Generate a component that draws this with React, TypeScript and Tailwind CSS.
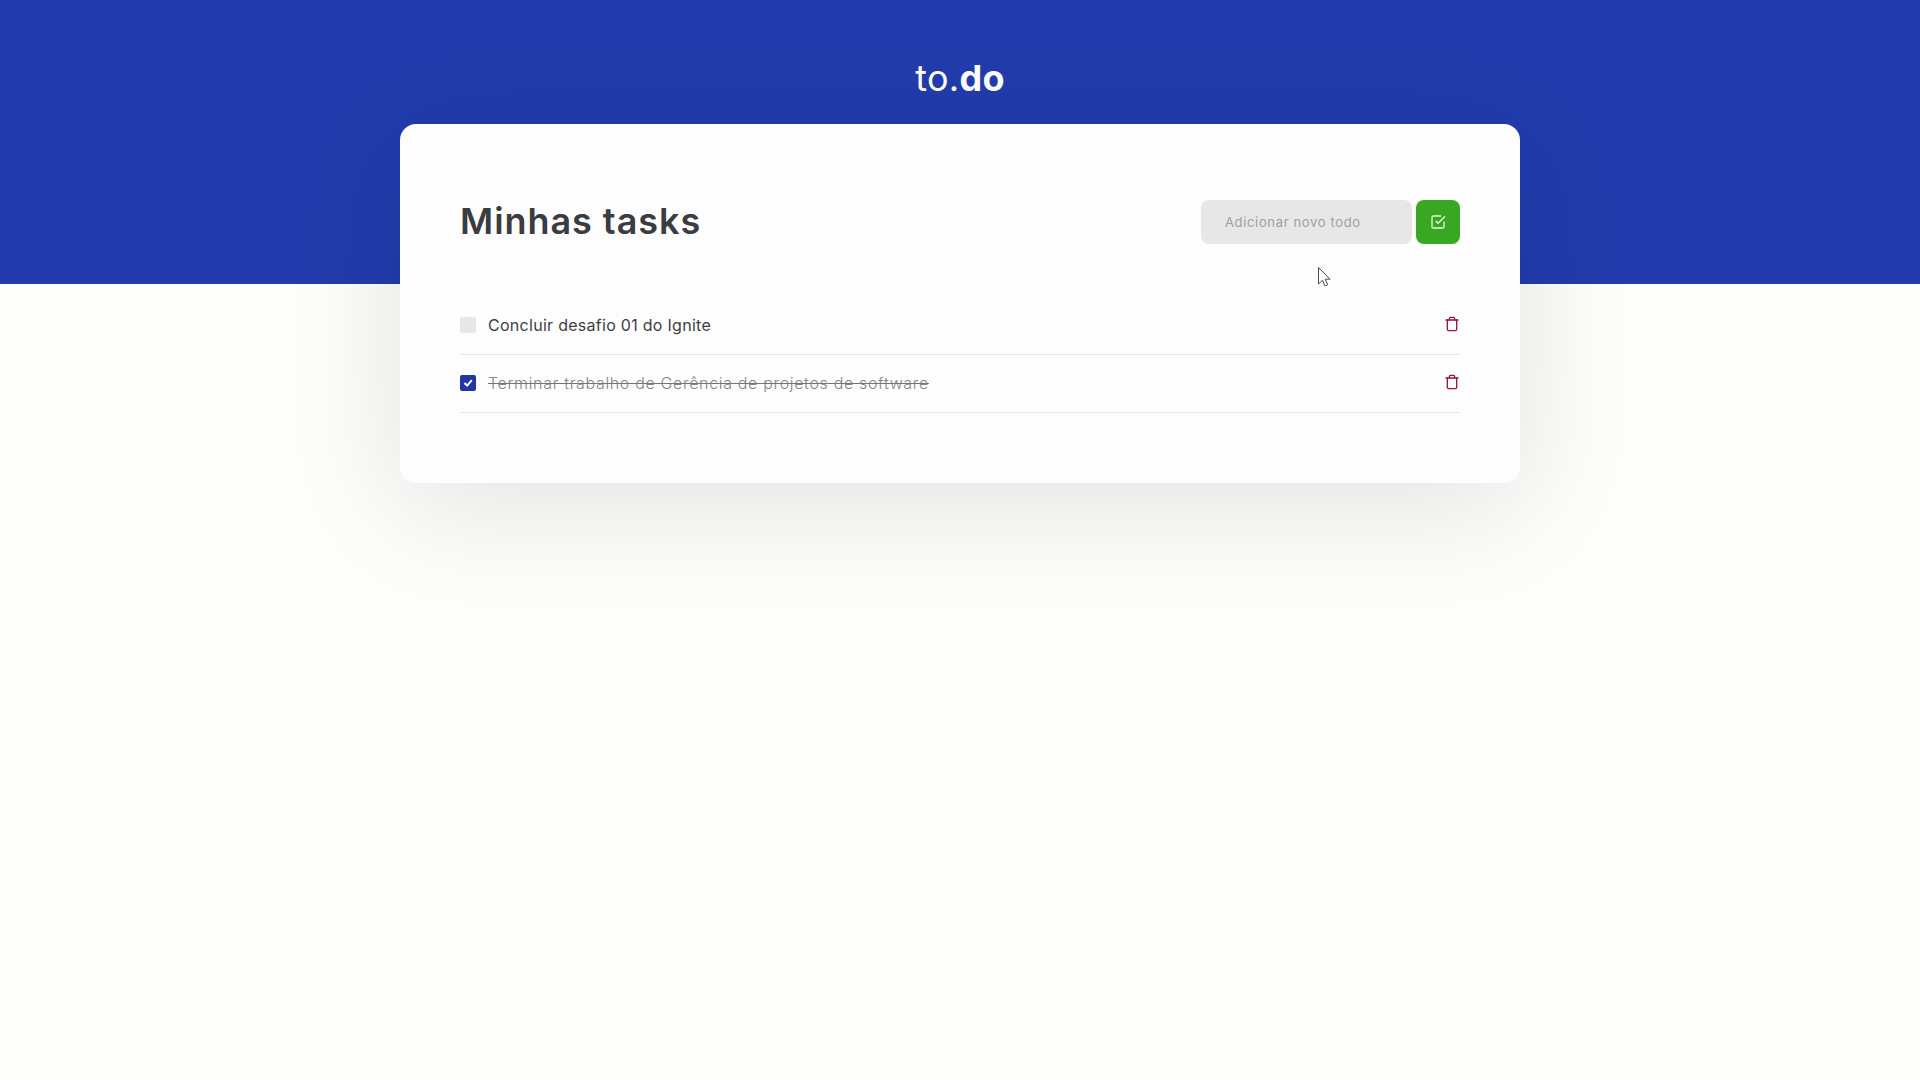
import { FiCheckSquare, FiTrash } from 'react-icons/fi';

type Task = { id: number; title: string; done: boolean };

const tasks: Task[] = [
  { id: 1, title: 'Concluir desafio 01 do Ignite', done: false },
  { id: 2, title: 'Terminar trabalho de Gerência de projetos de software', done: true },
];

function Checkbox({ checked }: { checked: boolean }) {
  return (
    <span
      className={`flex size-4 shrink-0 items-center justify-center rounded-xs ${
        checked ? 'bg-[#2237a5]' : 'bg-[#e7e7e7]'
      }`}
    >
      {checked && (
        <svg viewBox="0 0 16 16" className="size-4" fill="none" stroke="white" strokeWidth="2">
          <path d="M4.4 8 7.2 10.6 11.8 5.2" />
        </svg>
      )}
    </span>
  );
}

function TaskRow({ task }: { task: Task }) {
  return (
    <li className="flex h-[58px] items-center border-b border-[#e6e6e4] pb-px">
      <Checkbox checked={task.done} />
      <span
        className={
          task.done
            ? 'ml-3 text-base font-light tracking-[0.66px] text-[#85858a] line-through decoration-[#74747a] decoration-1'
            : 'ml-3 text-base font-normal tracking-[0.28px] text-[#3d3d45]'
        }
      >
        {task.title}
      </span>
      <FiTrash className="mb-0.5 ml-auto size-4 text-[#a01436]" />
    </li>
  );
}

export default function App() {
  return (
    <div className="relative min-h-screen bg-[#fdfdfc] font-['Inter',sans-serif]">
      <header className="flex h-[284px] justify-center bg-[#223cad] pt-[52px]">
        <h1 className="h-[52px] text-[36px] leading-[52px] font-normal tracking-[0.3px] text-white">
          to.<strong className="font-bold">do</strong>
        </h1>
      </header>
      <main className="relative mx-auto -mt-40 h-[359px] w-[1120px] rounded-2xl bg-[#fdfdfd] px-[60px] pt-[76px] shadow-[0_20px_120px_rgba(0,0,0,0.11)]">
        <div className="flex h-11 items-center">
          <h2 className="pb-0.5 text-[36px] leading-none font-semibold tracking-[0.95px] text-[#3b3b42]">
            Minhas tasks
          </h2>
          <div className="ml-auto flex gap-1">
            <input
              placeholder="Adicionar novo todo"
              className="h-11 w-[211px] rounded-lg bg-[#e7e7e7] px-6 pb-px text-[13px] font-normal tracking-[0.65px] outline-none placeholder:text-[#a0a0a4]"
            />
            <button className="flex size-11 items-center justify-center rounded-lg bg-[#38a822]">
              <FiCheckSquare className="size-4 text-[#e2f7dc]" />
            </button>
          </div>
        </div>
        <ul className="mt-[53px]">
          {tasks.map((task) => (
            <TaskRow key={task.id} task={task} />
          ))}
        </ul>
      </main>
      <svg
        className="absolute top-[266px] left-[1317px] h-[22px] w-[15px]"
        viewBox="0 0 15 22"
        fill="white"
        stroke="#4b4b50"
      >
        <path d="M1.5 1.5V18L5.5 14.2 8 20 10.7 18.8 8.2 13.2H13Z" />
      </svg>
    </div>
  );
}
